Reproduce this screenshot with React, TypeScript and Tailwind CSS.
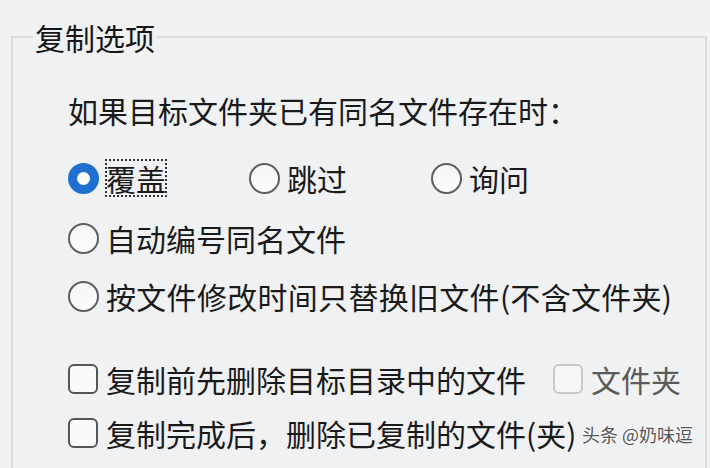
const font = "font-['Noto_Sans_CJK_SC','Noto_Sans',sans-serif]";

function Radio({ checked }: { checked?: boolean }) {
  if (checked) {
    return (
      <span className="w-[31px] h-[31px] rounded-full bg-[#1f6fcf] flex items-center justify-center shrink-0">
        <span className="w-[13px] h-[13px] rounded-full bg-white" />
      </span>
    );
  }
  return (
    <span className="w-[31px] h-[31px] rounded-full border-2 border-[#5e5e5e] bg-gradient-to-b from-[#f4f5f7] to-[#fdfdfd] shrink-0" />
  );
}

function Check({ disabled }: { disabled?: boolean }) {
  return (
    <span
      className={
        disabled
          ? 'w-[30px] h-[30px] rounded-[6px] border-2 border-[#c8c8c8] bg-[#f7f7f8] shrink-0'
          : 'w-[30px] h-[30px] rounded-[6px] border-2 border-[#555] bg-[#fafafa] shrink-0'
      }
    />
  );
}

export default function App() {
  return (
    <div className={`w-[710px] h-[468px] bg-[#f0f1f3] overflow-hidden relative text-[#1a1a1a] ${font}`}>
      <fieldset className="ml-[11px] mt-[19px] w-[696px] h-[480px] border-2 border-[#dcdcde] p-0 m-0">
        <legend className="ml-[20px] px-[2px] text-[30px] leading-[36px] text-[#161616]">复制选项</legend>

        <div className="pl-[55px] text-[30px] leading-[36px]">
          <div className="mt-[37px]">如果目标文件夹已有同名文件存在时：</div>

          <div className="mt-[32px] flex items-center h-[36px]">
            <label className="w-[181px] flex items-center gap-[7px]">
              <Radio checked />
              <span className="outline-dotted outline-2 outline-[#333] outline-offset-[-1px]">覆盖</span>
            </label>
            <label className="w-[182px] flex items-center gap-[7px]">
              <Radio />
              <span>跳过</span>
            </label>
            <label className="flex items-center gap-[7px]">
              <Radio />
              <span>询问</span>
            </label>
          </div>

          <label className="mt-[24px] flex items-center gap-[7px] h-[36px]">
            <Radio />
            <span>自动编号同名文件</span>
          </label>

          <label className="mt-[22px] flex items-center gap-[7px] h-[36px]">
            <Radio />
            <span className="tracking-[0.3px]">按文件修改时间只替换旧文件(不含文件夹)</span>
          </label>

          <div className="mt-[47px] flex items-center h-[36px]">
            <label className="flex items-center gap-[8px]">
              <Check />
              <span>复制前先删除目标目录中的文件</span>
            </label>
            <label className="ml-[27px] flex items-center gap-[8px] text-[#5a5a5a]">
              <Check disabled />
              <span>文件夹</span>
            </label>
          </div>

          <label className="mt-[18px] flex items-center gap-[8px] h-[36px]">
            <Check />
            <span>复制完成后，删除已复制的文件(夹)</span>
          </label>
        </div>
      </fieldset>

      <div className="absolute left-[582px] top-[421px] whitespace-nowrap text-[18px] leading-[26px] text-[#555] [text-shadow:0_0_2px_#fff,0_0_2px_#fff]">
        头条 @奶味逗
      </div>
    </div>
  );
}
